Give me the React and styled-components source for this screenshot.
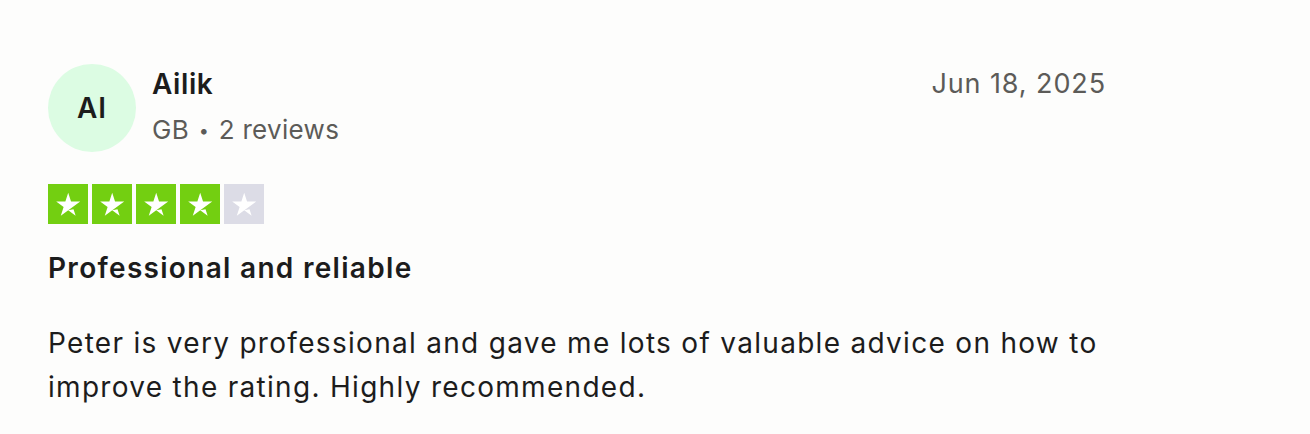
import React from 'react'
import styled, { createGlobalStyle } from 'styled-components'

const GlobalStyle = createGlobalStyle`
    body {
        margin: 0;
        background: #fdfdfc;
        font-family: Inter, "Noto Sans", sans-serif;
        color: #1c1c1c;
    }
`

const Card = styled.article`
    width: 1058px;
    padding: 64px 0 0 48px;
`

const Header = styled.header`
    display: flex;
    align-items: flex-start;
    gap: 16px;
`

const Avatar = styled.div`
    width: 88px;
    height: 88px;
    border-radius: 50%;
    background: #dcfce3;
    display: flex;
    align-items: center;
    justify-content: center;
    font-size: 28px;
    font-weight: 600;
    letter-spacing: 1px;
    color: #1c1c1c;
    flex-shrink: 0;
`

const Info = styled.div`
    display: flex;
    flex-direction: column;
    gap: 14px;
    padding-top: 4px;
`

const Name = styled.span`
    font-size: 28px;
    line-height: 32px;
    font-weight: 600;
    letter-spacing: 0.6px;
`

const Meta = styled.span`
    font-size: 26px;
    line-height: 32px;
    color: #5c5b58;
    letter-spacing: 0.3px;
`

const Dot = styled.span`
    font-size: 18px;
    vertical-align: 2px;
    margin: 0 2px;
`

const Date = styled.time`
    margin-left: auto;
    font-size: 27px;
    line-height: 32px;
    padding-top: 4px;
    color: #5c5b58;
    letter-spacing: 0.9px;
`

const Stars = styled.div`
    display: flex;
    gap: 4px;
    margin-top: 32px;
`

const StarBox = styled.div`
    width: 40px;
    height: 40px;
    background: ${p => (p.$on ? '#73cf11' : '#dcdce6')};
    display: flex;
    align-items: center;
    justify-content: center;
`

const Title = styled.h2`
    margin: 26px 0 0;
    font-size: 28px;
    line-height: 36px;
    font-weight: 600;
    letter-spacing: 1.3px;
`

const Body = styled.p`
    margin: 35px 0 0;
    font-size: 28px;
    line-height: 44px;
    letter-spacing: 1.3px;
`

const Star = () => (
    <svg width="34" height="34" viewBox="0 0 46 46">
        <path
            fill="#fff"
            d="M39.53 19.71L13.23 38.8l3.84-11.8L7.02 19.71h12.42l3.84-11.8 3.84 11.8h12.42zM23.28 31.51l7.18-1.51 2.86 8.8-10.04-7.29z"
        />
    </svg>
)

const Rating = ({ value }) => (
    <Stars>
        {[1, 2, 3, 4, 5].map(i => (
            <StarBox key={i} $on={i <= value}>
                <Star />
            </StarBox>
        ))}
    </Stars>
)

const App = () => (
    <>
        <GlobalStyle />
        <Card>
            <Header>
                <Avatar>AI</Avatar>
                <Info>
                    <Name>Ailik</Name>
                    <Meta>GB <Dot>•</Dot> 2 reviews</Meta>
                </Info>
                <Date>Jun 18, 2025</Date>
            </Header>
            <Rating value={4} />
            <Title>Professional and reliable</Title>
            <Body>
                Peter is very professional and gave me lots of valuable advice on how to improve the rating. Highly recommended.
            </Body>
        </Card>
    </>
)

export default App
